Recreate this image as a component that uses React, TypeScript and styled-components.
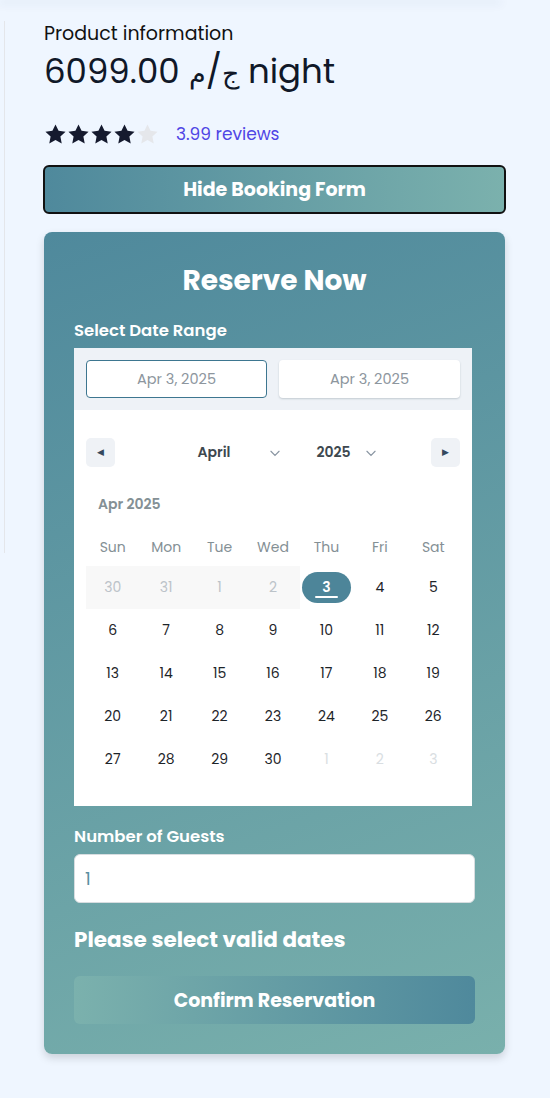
import styled, { createGlobalStyle } from "styled-components";

const GlobalStyle = createGlobalStyle`
  html, body {
    margin: 0;
    padding: 0;
    background: #eff6ff;
    font-family: "Poppins", "DejaVu Sans", sans-serif;
  }
  * { box-sizing: border-box; }
`;

const weekDays = ["Sun", "Mon", "Tue", "Wed", "Thu", "Fri", "Sat"];

type Day = { n: number; kind: "past" | "current" | "selected" | "next" };

const days: Day[] = [
  { n: 30, kind: "past" },
  { n: 31, kind: "past" },
  { n: 1, kind: "past" },
  { n: 2, kind: "past" },
  { n: 3, kind: "selected" },
  ...Array.from({ length: 27 }, (_, i) => ({ n: i + 4, kind: "current" as const })),
  { n: 1, kind: "next" },
  { n: 2, kind: "next" },
  { n: 3, kind: "next" },
];

const Star = ({ filled }: { filled: boolean }) => (
  <svg width="23" height="23" viewBox="0 0 24 24">
    <path
      d="M12 1.5l3.2 6.7 7.3.9-5.4 5 1.4 7.3L12 17.8l-6.5 3.6 1.4-7.3-5.4-5 7.3-.9z"
      fill={filled ? "#151a2e" : "#e5e7eb"}
    />
  </svg>
);

const Chevron = () => (
  <ChevronIcon width="14" height="14" viewBox="0 0 24 24" fill="none" stroke="#8a96a3" strokeWidth="2" strokeLinecap="round">
    <path d="M5 9l7 7 7-7" />
  </ChevronIcon>
);

const App = () => {
  return (
    <>
      <GlobalStyle />
      <TopShade />
      <Page>
        <Rail />
        <Main>
          <Subtitle>Product information</Subtitle>
          <Price>
            6099.00 <Arabic>ج</Arabic>/<Arabic>م</Arabic> night
          </Price>
          <RatingRow>
            <Stars>
              {[0, 1, 2, 3, 4].map((i) => (
                <Star key={i} filled={i < 4} />
              ))}
            </Stars>
            <Reviews>3.99 reviews</Reviews>
          </RatingRow>
          <ToggleButton>Hide Booking Form</ToggleButton>

          <Card>
            <CardTitle>Reserve Now</CardTitle>
            <FieldLabel $top={22}>Select Date Range</FieldLabel>
            <Calendar>
              <DateInputs>
                <DateInput $active>Apr 3, 2025</DateInput>
                <DateInput>Apr 3, 2025</DateInput>
              </DateInputs>
              <CalBody>
                <NavRow>
                  <NavButton>◀</NavButton>
                  <Pickers>
                    <Picker $width={138}>
                      April
                      <Chevron />
                    </Picker>
                    <Picker $width={91}>
                      2025
                      <Chevron />
                    </Picker>
                  </Pickers>
                  <NavButton>▶</NavButton>
                </NavRow>
                <MonthName>Apr 2025</MonthName>
                <Grid>
                  {weekDays.map((d) => (
                    <WeekDay key={d}>{d}</WeekDay>
                  ))}
                  {days.map((d, i) => (
                    <DayCell key={i} $kind={d.kind}>
                      {d.kind === "selected" ? <Selected>{d.n}</Selected> : d.n}
                    </DayCell>
                  ))}
                </Grid>
              </CalBody>
            </Calendar>

            <FieldLabel $top={20}>Number of Guests</FieldLabel>
            <GuestInput>1</GuestInput>
            <Warning>Please select valid dates</Warning>
            <ConfirmButton>Confirm Reservation</ConfirmButton>
          </Card>
        </Main>
      </Page>
    </>
  );
};

const TopShade = styled.div`
  width: 500px;
  height: 0;
  box-shadow: 0 2px 10px 2px rgba(30, 60, 110, 0.08);
`;

const Page = styled.div`
  display: flex;
  align-items: flex-start;
  padding-bottom: 45px;
`;

const Rail = styled.div`
  width: 5px;
  height: 532px;
  margin-top: 21px;
  border-right: 1px solid #e4e6ea;
  flex-shrink: 0;
`;

const Main = styled.div`
  margin-left: 39px;
  width: 461px;
  padding-top: 22px;
`;

const Subtitle = styled.div`
  font-size: 19px;
  line-height: 24px;
  color: #111;
`;

const Price = styled.div`
  margin-top: 5px;
  font-family: "Poppins", sans-serif;
  font-size: 34px;
  line-height: 40px;
  color: #101828;
`;

const Arabic = styled.span`
  font-size: 27px;
  line-height: 1;
`;

const RatingRow = styled.div`
  display: flex;
  align-items: center;
  margin-top: 31px;
  height: 24px;
`;

const Stars = styled.div`
  display: flex;
`;

const Reviews = styled.span`
  margin-left: 17px;
  color: #5046e5;
  font-size: 17px;
`;

const ToggleButton = styled.button`
  display: block;
  width: 463px;
  margin: 19px 0 0 -1px;
  height: 49px;
  border: 2px solid #111;
  border-radius: 6px;
  background: linear-gradient(90deg, #4f899c 0%, #7bb1ad 100%);
  color: #fff;
  font-family: inherit;
  font-weight: 700;
  font-size: 19px;
`;

const Card = styled.div`
  margin-top: 18px;
  border-radius: 8px;
  padding: 32px 30px 30px;
  background: linear-gradient(160deg, #4f899c 0%, #79b0ac 100%);
  box-shadow: 0 4px 8px rgba(0, 0, 0, 0.15);
  color: #fff;
`;

const CardTitle = styled.h2`
  margin: 0;
  text-align: center;
  font-size: 28px;
  line-height: 34px;
  font-weight: 700;
`;

const FieldLabel = styled.div<{ $top: number }>`
  margin-top: ${(p) => p.$top}px;
  font-size: 16.5px;
  font-weight: 600;
  line-height: 22px;
`;

const Calendar = styled.div`
  margin-top: 6px;
  width: 398px;
  background: #fff;
`;

const DateInputs = styled.div`
  display: grid;
  grid-template-columns: 1fr 1fr;
  gap: 12px;
  padding: 12px;
  background: #eef2f7;
`;

const DateInput = styled.div<{ $active?: boolean }>`
  height: 38px;
  display: flex;
  align-items: center;
  justify-content: center;
  background: #fff;
  border-radius: 4px;
  border: 1px solid ${(p) => (p.$active ? "#3d7690" : "transparent")};
  box-shadow: ${(p) => (p.$active ? "none" : "0 1px 2px rgba(35,57,66,0.21)")};
  color: #8d969e;
  font-size: 14.5px;
`;

const CalBody = styled.div`
  padding: 28px 12px 25px;
`;

const NavRow = styled.div`
  display: flex;
  align-items: center;
  justify-content: space-between;
`;

const NavButton = styled.div`
  width: 29px;
  height: 29px;
  border-radius: 5px;
  background: #eff2f6;
  color: #34495e;
  font-size: 9px;
  display: flex;
  align-items: center;
  justify-content: center;
`;

const Pickers = styled.div`
  display: flex;
  gap: 5px;
  margin-right: 22px;
`;

const Picker = styled.div<{ $width: number }>`
  position: relative;
  width: ${(p) => p.$width}px;
  height: 29px;
  line-height: 29px;
  text-align: center;
  color: #3e484f;
  font-weight: 600;
  font-size: 14px;
`;

const ChevronIcon = styled.svg`
  position: absolute;
  right: 1px;
  top: 8px;
`;

const MonthName = styled.div`
  margin: 27px 0 0 12px;
  color: #849095;
  font-weight: 600;
  font-size: 14px;
  line-height: 20px;
`;

const Grid = styled.div`
  display: grid;
  grid-template-columns: repeat(7, 1fr);
  margin-top: 23px;
`;

const WeekDay = styled.div`
  text-align: center;
  color: #849095;
  font-size: 14px;
  line-height: 20px;
  margin-bottom: 9px;
`;

const dayColor = { past: "#bcc3c9", current: "#1d2429", selected: "#fff", next: "#d9dee2" };

const DayCell = styled.div<{ $kind: Day["kind"] }>`
  height: 43px;
  display: flex;
  align-items: center;
  justify-content: center;
  font-size: 14px;
  color: ${(p) => dayColor[p.$kind]};
  background: ${(p) => (p.$kind === "past" ? "#f8f8f8" : "transparent")};
`;

const Selected = styled.span`
  width: 49px;
  height: 31px;
  border-radius: 16px;
  background: #4d8599;
  color: #fff;
  font-weight: 600;
  display: flex;
  align-items: center;
  justify-content: center;
  position: relative;

  &::after {
    content: "";
    position: absolute;
    left: 13px;
    right: 13px;
    bottom: 5px;
    height: 2px;
    border-radius: 1px;
    background: #fff;
  }
`;

const GuestInput = styled.div`
  margin-top: 6px;
  height: 49px;
  background: #fff;
  border: 1px solid #d7dde0;
  border-radius: 6px;
  display: flex;
  align-items: center;
  padding: 0 10px;
  color: #5a8fa1;
  font-size: 18px;
`;

const Warning = styled.div`
  margin-top: 23px;
  font-size: 21.5px;
  line-height: 28px;
  font-weight: 700;
`;

const ConfirmButton = styled.button`
  display: block;
  width: 100%;
  height: 48px;
  margin-top: 22px;
  border: none;
  border-radius: 6px;
  background: linear-gradient(90deg, #7bb1ad 0%, #4f899c 100%);
  color: #fff;
  font-family: inherit;
  font-weight: 700;
  font-size: 19px;
`;

export default App;
